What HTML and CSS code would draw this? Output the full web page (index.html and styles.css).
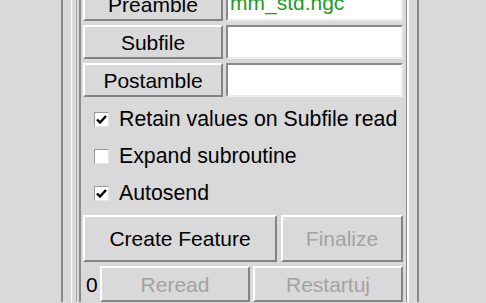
FILE: index.html
```html
<!DOCTYPE html>
<html lang="en">
<head>
<meta charset="utf-8">
<title>Feature panel</title>
<link rel="stylesheet" href="styles.css">
</head>
<body>
<div class="outer">
  <div class="groove">
    <div class="ridge">
      <div class="panel">
        <div class="filerow">
          <button class="btn filebtn">Preamble</button>
          <div class="entry green">mm_std.ngc</div>
        </div>
        <div class="filerow">
          <button class="btn filebtn">Subfile</button>
          <div class="entry"></div>
        </div>
        <div class="filerow">
          <button class="btn filebtn">Postamble</button>
          <div class="entry"></div>
        </div>

        <label class="check"><span class="box"><svg viewBox="0 0 13 13" width="13" height="13"><path d="M2 6.5 L5 9.5 L11 3" fill="none" stroke="#000" stroke-width="2.4"/></svg></span>Retain values on Subfile read</label>
        <label class="check"><span class="box"></span>Expand subroutine</label>
        <label class="check"><span class="box"><svg viewBox="0 0 13 13" width="13" height="13"><path d="M2 6.5 L5 9.5 L11 3" fill="none" stroke="#000" stroke-width="2.4"/></svg></span>Autosend</label>

        <div class="actions">
          <button class="btn create">Create Feature</button>
          <button class="btn finalize" disabled>Finalize</button>
        </div>
        <div class="lastrow">
          <span class="count">0</span>
          <button class="btn reread" disabled>Reread</button>
          <button class="btn restart" disabled>Restartuj</button>
        </div>
      </div>
    </div>
  </div>
</div>
</body>
</html>
```

FILE: styles.css
```css
body {
  margin: 0;
  background: #d9d9d9;
  font: normal 21px/1 "Liberation Sans", Arial, sans-serif;
  color: #000;
  overflow: hidden;
}

.outer {
  display: flex;
  margin-left: 61px;
  width: 346px;
  border-left: 2px solid #8a8a8a;
  border-right: 2px solid #8a8a8a;
  padding-left: 8px;
  margin-top: -13px;
}

.groove {
  border-left: 1px solid #fff;
  padding-left: 4px;
}

.ridge {
  border-left: 1px solid #a8a8a8;
  border-right: 2px solid #fff;
  padding-left: 2px;
}

.panel {
  width: 320px;
  border-left: 2px solid #8a8a8a;
  border-right: 1px solid #8a8a8a;
  padding: 0 3px 0 2px;
}

.btn {
  font: inherit;
  color: #000;
  background: #d9d9d9;
  border: 2px solid;
  border-color: #fff #838383 #838383 #fff;
  padding: 0;
  margin: 0;
}

.btn:disabled {
  color: #a3a3a3;
}

.filerow {
  display: flex;
  gap: 3px;
  height: 34px;
  margin-bottom: 4px;
}

.filebtn {
  width: 140px;
}

.entry {
  flex: 1;
  background: #fff;
  border: 2px solid;
  border-color: #8a8a8a #ececec #ececec #8a8a8a;
  padding: 3px 2px 0;
  overflow: hidden;
}

.green {
  color: #1f9c1f;
}

.check {
  display: flex;
  align-items: center;
  height: 37px;
  padding-left: 11px;
  font-size: 21.3px;
}

.box {
  display: flex;
  align-items: center;
  justify-content: center;
  width: 13px;
  height: 13px;
  margin-right: 10px;
  background: #fff;
  border: 1px solid;
  border-color: #9a9a9a #e6e6e6 #e6e6e6 #9a9a9a;
}

.actions {
  display: flex;
  gap: 4px;
  margin-top: 3px;
  height: 47px;
}

.create {
  width: 194px;
}

.finalize {
  flex: 1;
}

.lastrow {
  display: flex;
  align-items: center;
  margin-top: 4px;
  height: 36px;
}

.count {
  width: 14px;
  padding-left: 3px;
}

.reread {
  width: 150px;
  height: 100%;
  margin-right: 3px;
}

.restart {
  flex: 1;
  height: 100%;
}
```
